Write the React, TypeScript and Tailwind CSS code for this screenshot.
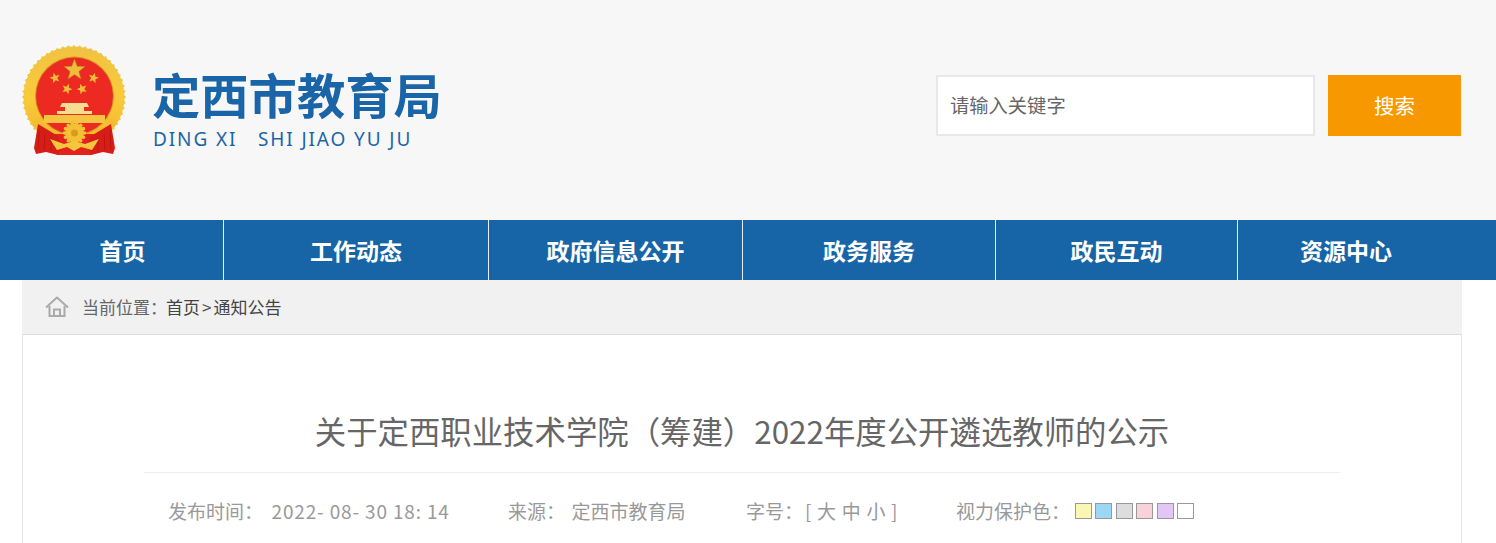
const CJK = "font-['Noto_Sans_CJK_SC','Noto_Sans',sans-serif]";

function star(cx: number, cy: number, r: number, rot = 0) {
  const pts: string[] = [];
  for (let i = 0; i < 10; i++) {
    const rr = i % 2 === 0 ? r : r * 0.42;
    const a = (-90 + rot + i * 36) * (Math.PI / 180);
    pts.push(`${(cx + rr * Math.cos(a)).toFixed(2)},${(cy + rr * Math.sin(a)).toFixed(2)}`);
  }
  return pts.join(" ");
}

function Emblem() {
  const bumps = Array.from({ length: 56 }, (_, i) => (i * 360) / 56);
  const teeth = Array.from({ length: 14 }, (_, i) => (i * 360) / 14);
  return (
    <svg width="106" height="112" viewBox="22 44 106 112" className="shrink-0">
      <defs>
        <linearGradient id="g" x1="0" y1="0" x2="0" y2="1">
          <stop offset="0" stopColor="#f0c243" />
          <stop offset="0.5" stopColor="#f9cb3a" />
          <stop offset="1" stopColor="#f1b128" />
        </linearGradient>
        <filter id="b"><feGaussianBlur stdDeviation="0.55" /></filter>
      </defs>
      <g filter="url(#b)">
        <circle cx="74" cy="97" r="50.5" fill="url(#g)" />
        {bumps.map((a) => (
          <circle
            key={a}
            cx={74 + 50.5 * Math.cos((a * Math.PI) / 180)}
            cy={97 + 50.5 * Math.sin((a * Math.PI) / 180)}
            r="1.2"
            fill="#f3c43c"
          />
        ))}
        <circle cx="74.5" cy="96" r="39.5" fill="#d8981f" />
        <circle cx="74.5" cy="96" r="38.5" fill="#ec2b23" />
        <polygon points={star(74.5, 70, 11)} fill="#edbd3a" stroke="#b98319" strokeWidth="0.5" />
        <polygon points={star(55, 78, 5.5, -15)} fill="#edbd3a" />
        <polygon points={star(93.5, 78, 5.5, 15)} fill="#edbd3a" />
        <polygon points={star(67, 89, 5.5, 20)} fill="#edbd3a" />
        <polygon points={star(82, 89, 5.5, -20)} fill="#edbd3a" />
        <path d="M62 103 L87 103 L89 107 L84 107 L84 111 L92 111 L92 114 L57 114 L57 111 L65 111 L65 107 L60 107 Z" fill="#f7dd92" />
        <rect x="44" y="115" width="61" height="8" fill="#f5c440" />
        <path d="M50 134 L99 134 L92 155 L57 155 Z" fill="#e3241e" />
        <path d="M38 124 L58 136 L62 147 L58 155 L46 152 L36 154 L34 148 Z" fill="#d81f19" />
        <path d="M111 124 L91 136 L87 147 L91 155 L103 152 L113 154 L115 148 Z" fill="#d81f19" />
        <path d="M39 130 L38 150 M45 134 L44 151 M51 137 L51 151 M110 130 L111 150 M104 134 L105 151 M98 137 L98 151" stroke="#b5150f" strokeWidth="0.9" />
        {teeth.map((a) => (
          <circle
            key={a}
            cx={74.5 + 10 * Math.cos((a * Math.PI) / 180)}
            cy={133 + 10 * Math.sin((a * Math.PI) / 180)}
            r="1.8"
            fill="#f4c136"
          />
        ))}
        <circle cx="74.5" cy="133" r="9.5" fill="#f4c136" />
        <circle cx="74.5" cy="133" r="3.5" fill="#d99a20" />
        <path d="M50 139 L64 144 L74 141 L85 144 L99 139 L92 150 L81 147 L74 151 L67 147 L57 150 Z" fill="#f6c73c" />
      </g>
    </svg>
  );
}

function HomeIcon() {
  return (
    <svg width="24" height="22" viewBox="0 0 24 22" fill="none" stroke="#aaaaaa" strokeWidth="2" className="shrink-0">
      <path d="M1 11.5 L12 1.5 L23 11.5" strokeLinejoin="round" />
      <path d="M4.5 10 V20 H19.5 V10" />
      <path d="M9 20 V13.5 H15 V20" />
    </svg>
  );
}

const navItems = [
  { t: "首页", c: "w-[224px] pl-[22px]" },
  { t: "工作动态", c: "w-[265px]" },
  { t: "政府信息公开", c: "w-[254px]" },
  { t: "政务服务", c: "w-[253px]" },
  { t: "政民互动", c: "w-[242px]" },
  { t: "资源中心", c: "flex-1 pr-[42px]" },
];

const swatches = ["bg-[#faf6b4]", "bg-[#9cd8f5]", "bg-[#dddddd]", "bg-[#f8d2da]", "bg-[#e2c6f6]", "bg-white"];

export default function App() {
  return (
    <div className={`h-[543px] w-[1496px] overflow-hidden bg-white ${CJK}`}>
      <header className="flex h-[220px] items-start justify-between bg-[#f7f7f7] pl-[22px] pr-[35px]">
        <div className="mt-[44px] flex items-start">
          <Emblem />
          <div className="ml-[24px] flex flex-col text-[#1a65a8]">
            <div className="mt-[15px] h-[68px] text-[48.3px] font-bold leading-[68px]">定西市教育局</div>
            <div className="ml-[1px] h-[24px] whitespace-pre font-['Noto_Sans',sans-serif] text-[19px] leading-[24px] tracking-[1.9px]">
              {"DING XI   SHI JIAO YU JU"}
            </div>
          </div>
        </div>
        <div className="mt-[75px] flex">
          <div className="flex h-[61px] w-[379px] items-center border-2 border-[#e8e8e8] bg-white pl-[12px] text-[19.3px] text-[#666666]">
            请输入关键字
          </div>
          <button className="ml-[13px] h-[61px] w-[133px] bg-[#f79800] text-[20.5px] text-white">搜索</button>
        </div>
      </header>

      <nav className="flex h-[60px] bg-[#1765a7]">
        {navItems.map((n, i) => (
          <div
            key={n.t}
            className={`flex items-center justify-center ${n.c} ${i < navItems.length - 1 ? "border-r border-[#e8eef5]" : ""} text-[23px] font-bold text-white`}
          >
            {n.t}
          </div>
        ))}
      </nav>

      <main className="mx-[22px] w-[1440px]">
        <div className="flex h-[55px] items-center border-b border-[#dddddd] bg-[#f1f1f1] pl-[23px] text-[17px] text-[#666666]">
          <HomeIcon />
          <span className="ml-[13px]">当前位置：</span>
          <span className="ml-[-1px] text-[#444444]">首页</span>
          <span className="mx-[2px] text-[#555555]">&gt;</span>
          <span className="text-[#444444]">通知公告</span>
        </div>
        <div className="h-[208px] border-x border-[#e5e5e5] bg-white">
          <div className="mx-[121px] flex h-[138px] items-end justify-center border-b border-[#eeeeee] pb-[18px] text-[31.4px] leading-[46px] text-[#666666]">
            关于定西职业技术学院（筹建）2022年度公开遴选教师的公示
          </div>
          <div className="flex h-[76px] items-center pl-[145px] text-[19px] text-[#999999]">
            <span className="w-[340px] whitespace-pre">
              发布时间：  <span className="tracking-[0.85px]">2022- 08- 30 18: 14</span>
            </span>
            <span className="w-[238px] whitespace-pre">
              来源：<span className="ml-[-2px]">  定西市教育局</span>
            </span>
            <span className="w-[210px] whitespace-pre">
              字号：<span className="ml-[2px] tracking-[0.7px]">[ 大 中 小 ]</span>
            </span>
            <span className="whitespace-pre">视力保护色：</span>
            <div className="ml-[5px] flex gap-[3.4px]">
              {swatches.map((s) => (
                <span key={s} className={`block h-[16px] w-[17px] border border-[#999999] ${s}`} />
              ))}
            </div>
          </div>
        </div>
      </main>
    </div>
  );
}
